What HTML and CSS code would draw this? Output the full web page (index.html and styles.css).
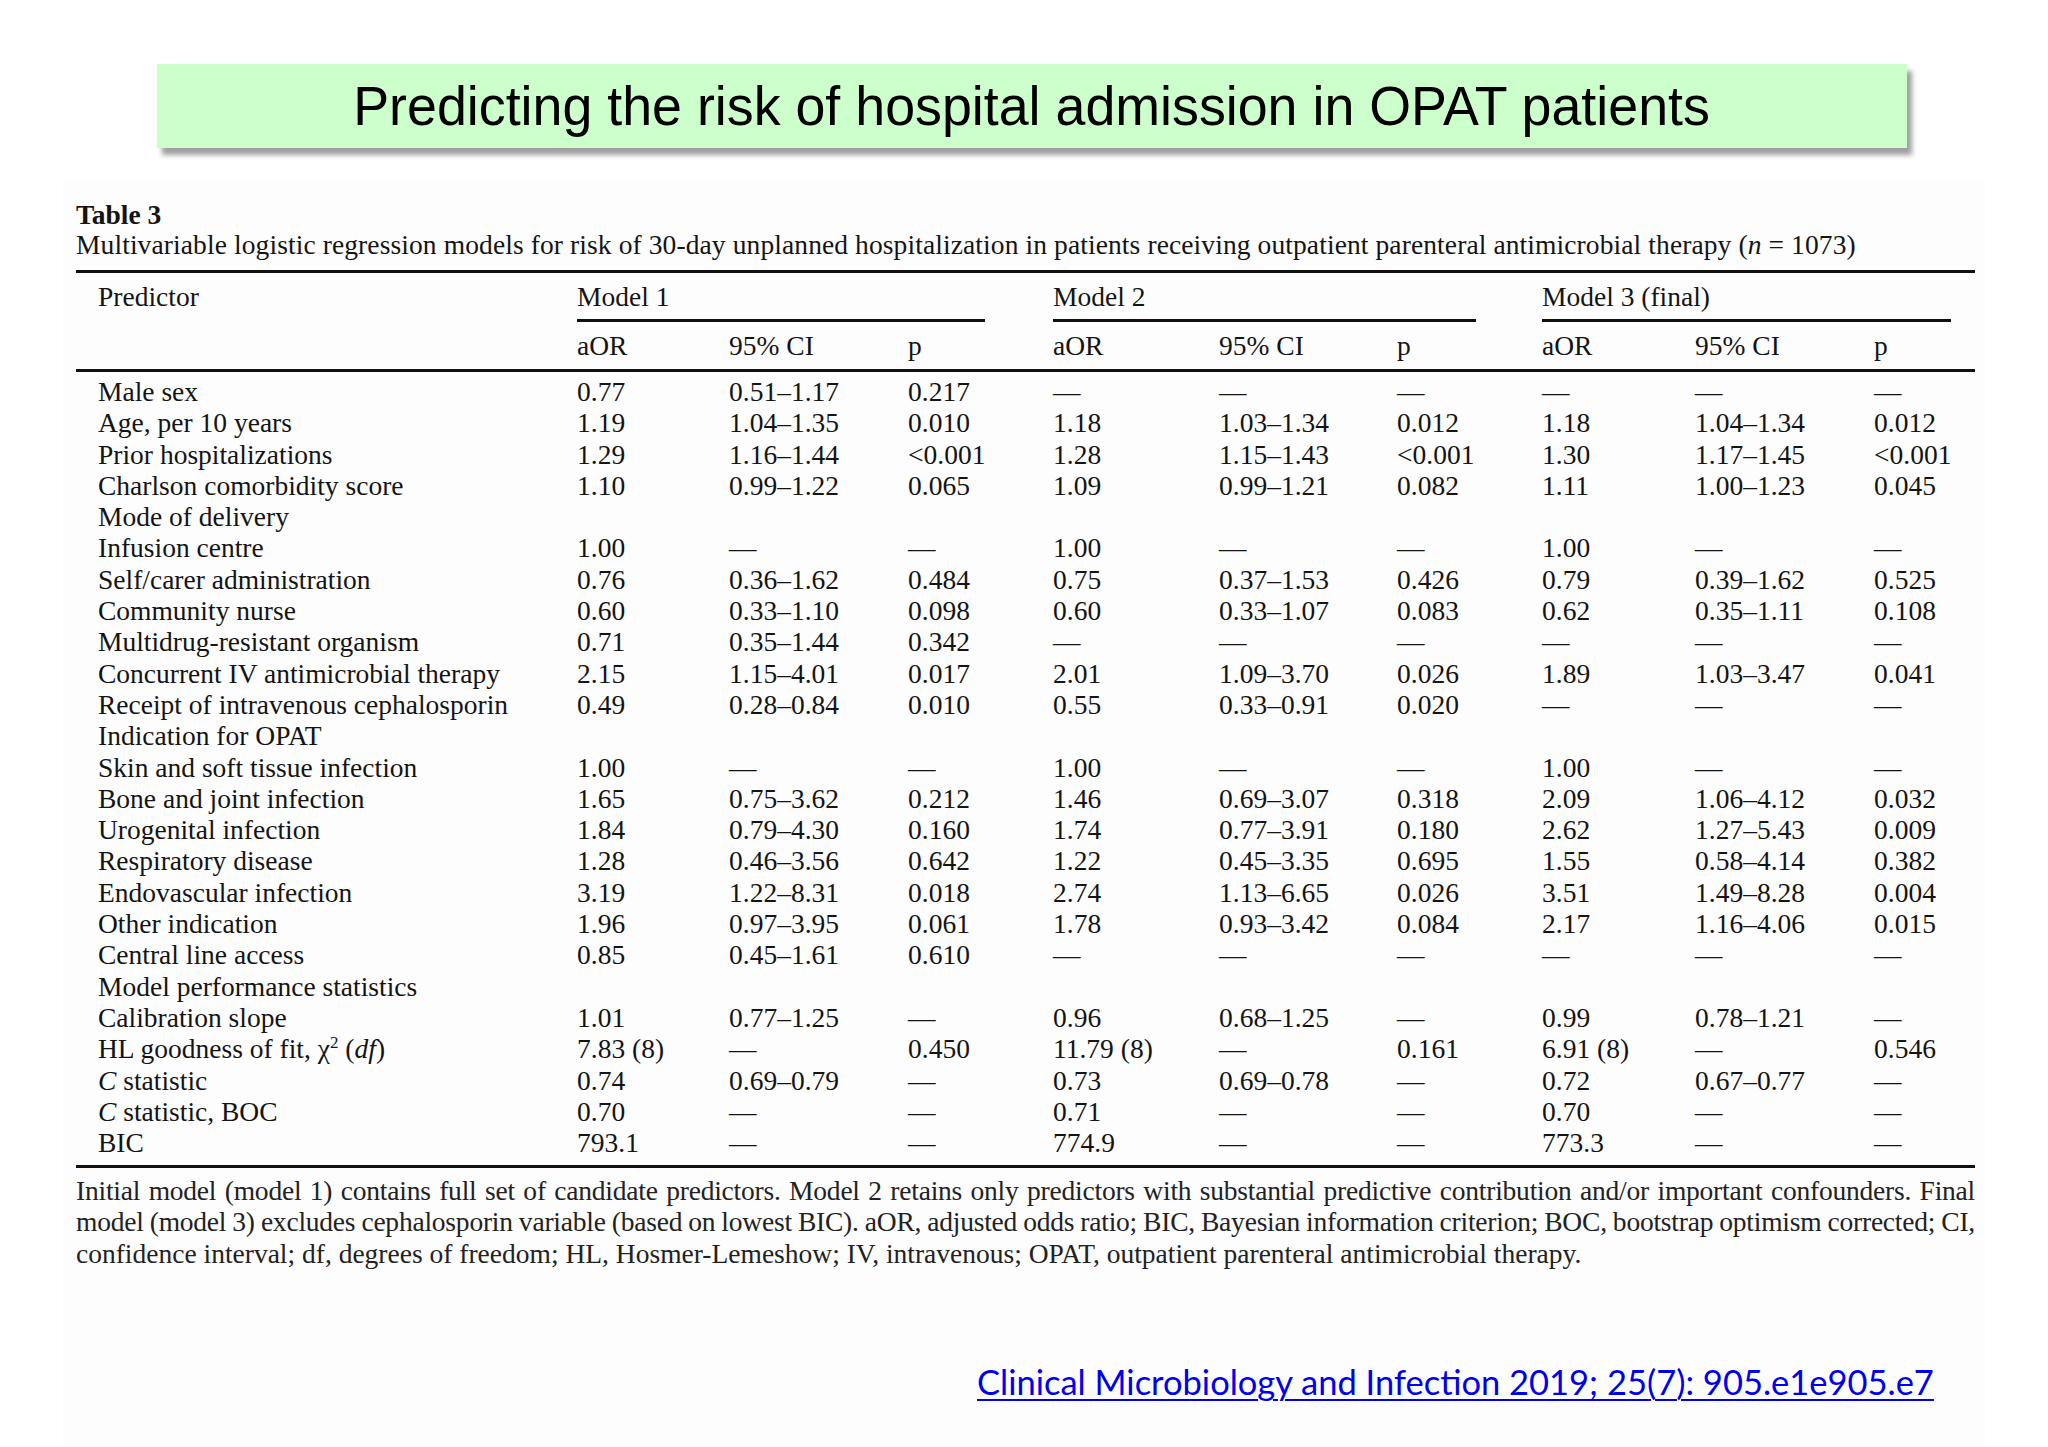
FILE: index.html
```html
<!DOCTYPE html>
<html lang="en">
<head>
<meta charset="utf-8">
<title>Predicting the risk of hospital admission in OPAT patients</title>
<link rel="stylesheet" href="styles.css">
</head>
<body>
<div class="slide">
  <div class="title-box"><span class="title-text">Predicting the risk of hospital admission in OPAT patients</span></div>
  <div class="paper">
    <div class="tbl-label">Table 3</div>
    <div class="tbl-caption">Multivariable logistic regression models for risk of 30-day unplanned hospitalization in patients receiving outpatient parenteral antimicrobial therapy (<i>n</i> = 1073)</div>
    <table class="data">
      <colgroup>
        <col class="c-pred"><col class="c-aor1"><col class="c-ci1"><col class="c-p1">
        <col class="c-aor2"><col class="c-ci2"><col class="c-p2">
        <col class="c-aor3"><col class="c-ci3"><col class="c-p3">
      </colgroup>
      <thead>
        <tr class="h1">
          <th class="pred">Predictor</th>
          <th colspan="3"><div class="mlabel">Model 1</div><div class="mrule r1"></div></th>
          <th colspan="3"><div class="mlabel">Model 2</div><div class="mrule r2"></div></th>
          <th colspan="3"><div class="mlabel">Model 3 (final)</div><div class="mrule r3"></div></th>
        </tr>
        <tr class="h2">
          <th class="pred"></th>
          <th>aOR</th><th>95% CI</th><th>p</th>
          <th>aOR</th><th>95% CI</th><th>p</th>
          <th>aOR</th><th>95% CI</th><th>p</th>
        </tr>
      </thead>
      <tbody>
        <tr class="first"><td class="pred">Male sex</td><td>0.77</td><td>0.51–1.17</td><td>0.217</td><td>—</td><td>—</td><td>—</td><td>—</td><td>—</td><td>—</td></tr>
        <tr><td class="pred">Age, per 10 years</td><td>1.19</td><td>1.04–1.35</td><td>0.010</td><td>1.18</td><td>1.03–1.34</td><td>0.012</td><td>1.18</td><td>1.04–1.34</td><td>0.012</td></tr>
        <tr><td class="pred">Prior hospitalizations</td><td>1.29</td><td>1.16–1.44</td><td>&lt;0.001</td><td>1.28</td><td>1.15–1.43</td><td>&lt;0.001</td><td>1.30</td><td>1.17–1.45</td><td>&lt;0.001</td></tr>
        <tr><td class="pred">Charlson comorbidity score</td><td>1.10</td><td>0.99–1.22</td><td>0.065</td><td>1.09</td><td>0.99–1.21</td><td>0.082</td><td>1.11</td><td>1.00–1.23</td><td>0.045</td></tr>
        <tr><td class="pred">Mode of delivery</td><td></td><td></td><td></td><td></td><td></td><td></td><td></td><td></td><td></td></tr>
        <tr><td class="pred">Infusion centre</td><td>1.00</td><td>—</td><td>—</td><td>1.00</td><td>—</td><td>—</td><td>1.00</td><td>—</td><td>—</td></tr>
        <tr><td class="pred">Self/carer administration</td><td>0.76</td><td>0.36–1.62</td><td>0.484</td><td>0.75</td><td>0.37–1.53</td><td>0.426</td><td>0.79</td><td>0.39–1.62</td><td>0.525</td></tr>
        <tr><td class="pred">Community nurse</td><td>0.60</td><td>0.33–1.10</td><td>0.098</td><td>0.60</td><td>0.33–1.07</td><td>0.083</td><td>0.62</td><td>0.35–1.11</td><td>0.108</td></tr>
        <tr><td class="pred">Multidrug-resistant organism</td><td>0.71</td><td>0.35–1.44</td><td>0.342</td><td>—</td><td>—</td><td>—</td><td>—</td><td>—</td><td>—</td></tr>
        <tr><td class="pred">Concurrent IV antimicrobial therapy</td><td>2.15</td><td>1.15–4.01</td><td>0.017</td><td>2.01</td><td>1.09–3.70</td><td>0.026</td><td>1.89</td><td>1.03–3.47</td><td>0.041</td></tr>
        <tr><td class="pred">Receipt of intravenous cephalosporin</td><td>0.49</td><td>0.28–0.84</td><td>0.010</td><td>0.55</td><td>0.33–0.91</td><td>0.020</td><td>—</td><td>—</td><td>—</td></tr>
        <tr><td class="pred">Indication for OPAT</td><td></td><td></td><td></td><td></td><td></td><td></td><td></td><td></td><td></td></tr>
        <tr><td class="pred">Skin and soft tissue infection</td><td>1.00</td><td>—</td><td>—</td><td>1.00</td><td>—</td><td>—</td><td>1.00</td><td>—</td><td>—</td></tr>
        <tr><td class="pred">Bone and joint infection</td><td>1.65</td><td>0.75–3.62</td><td>0.212</td><td>1.46</td><td>0.69–3.07</td><td>0.318</td><td>2.09</td><td>1.06–4.12</td><td>0.032</td></tr>
        <tr><td class="pred">Urogenital infection</td><td>1.84</td><td>0.79–4.30</td><td>0.160</td><td>1.74</td><td>0.77–3.91</td><td>0.180</td><td>2.62</td><td>1.27–5.43</td><td>0.009</td></tr>
        <tr><td class="pred">Respiratory disease</td><td>1.28</td><td>0.46–3.56</td><td>0.642</td><td>1.22</td><td>0.45–3.35</td><td>0.695</td><td>1.55</td><td>0.58–4.14</td><td>0.382</td></tr>
        <tr><td class="pred">Endovascular infection</td><td>3.19</td><td>1.22–8.31</td><td>0.018</td><td>2.74</td><td>1.13–6.65</td><td>0.026</td><td>3.51</td><td>1.49–8.28</td><td>0.004</td></tr>
        <tr><td class="pred">Other indication</td><td>1.96</td><td>0.97–3.95</td><td>0.061</td><td>1.78</td><td>0.93–3.42</td><td>0.084</td><td>2.17</td><td>1.16–4.06</td><td>0.015</td></tr>
        <tr><td class="pred">Central line access</td><td>0.85</td><td>0.45–1.61</td><td>0.610</td><td>—</td><td>—</td><td>—</td><td>—</td><td>—</td><td>—</td></tr>
        <tr><td class="pred">Model performance statistics</td><td></td><td></td><td></td><td></td><td></td><td></td><td></td><td></td><td></td></tr>
        <tr><td class="pred">Calibration slope</td><td>1.01</td><td>0.77–1.25</td><td>—</td><td>0.96</td><td>0.68–1.25</td><td>—</td><td>0.99</td><td>0.78–1.21</td><td>—</td></tr>
        <tr><td class="pred">HL goodness of fit, χ<sup>2</sup> (<i>df</i>)</td><td>7.83 (8)</td><td>—</td><td>0.450</td><td>11.79 (8)</td><td>—</td><td>0.161</td><td>6.91 (8)</td><td>—</td><td>0.546</td></tr>
        <tr><td class="pred"><i>C</i> statistic</td><td>0.74</td><td>0.69–0.79</td><td>—</td><td>0.73</td><td>0.69–0.78</td><td>—</td><td>0.72</td><td>0.67–0.77</td><td>—</td></tr>
        <tr><td class="pred"><i>C</i> statistic, BOC</td><td>0.70</td><td>—</td><td>—</td><td>0.71</td><td>—</td><td>—</td><td>0.70</td><td>—</td><td>—</td></tr>
        <tr class="last"><td class="pred">BIC</td><td>793.1</td><td>—</td><td>—</td><td>774.9</td><td>—</td><td>—</td><td>773.3</td><td>—</td><td>—</td></tr>
      </tbody>
    </table>
    <div class="footnote">
      <div class="fn-line fn-just">Initial model (model 1) contains full set of candidate predictors. Model 2 retains only predictors with substantial predictive contribution and/or important confounders. Final</div>
      <div class="fn-line fn-just">model (model 3) excludes cephalosporin variable (based on lowest BIC). aOR, adjusted odds ratio; BIC, Bayesian information criterion; BOC, bootstrap optimism corrected; CI,</div>
      <div class="fn-line">confidence interval; df, degrees of freedom; HL, Hosmer-Lemeshow; IV, intravenous; OPAT, outpatient parenteral antimicrobial therapy.</div>
    </div>
    <div class="ref-row"><a class="ref-link" href="#">Clinical Microbiology and Infection 2019; 25(7): 905.e1e905.e7</a></div>
  </div>
</div>
</body>
</html>
```

FILE: styles.css
```css
html, body {
  margin: 0;
  padding: 0;
  background: #ffffff;
}

.slide {
  width: 2048px;
  height: 1447px;
  overflow: hidden;
  padding-top: 64px;
  box-sizing: border-box;
  background: #ffffff;
}

.title-box {
  width: 1750px;
  height: 84px;
  margin-left: 157px;
  background: #ccffcc;
  box-shadow: 5px 7px 5px rgba(0, 0, 0, 0.38);
  display: flex;
  justify-content: center;
  align-items: center;
}

.title-text {
  display: inline-block;
  font-family: "Liberation Sans", Arial, sans-serif;
  font-size: 56px;
  line-height: 1;
  color: #000000;
  white-space: nowrap;
  transform: scaleX(0.96);
}

.paper {
  margin-top: 32px;
  margin-left: 63px;
  width: 1922px;
  height: 1267px;
  box-sizing: border-box;
  padding-top: 20px;
  padding-left: 13px;
  background: #fdfdfd;
  font-family: "Liberation Serif", "Times New Roman", serif;
  font-size: 27.5px;
  color: #141414;
}

.tbl-label {
  font-weight: bold;
  line-height: 30px;
  height: 30px;
}

.tbl-caption {
  line-height: 30px;
  height: 30px;
  white-space: nowrap;
  letter-spacing: 0.1px;
}

.data {
  margin-top: 10px;
  width: 1899px;
  table-layout: fixed;
  border-collapse: separate;
  border-spacing: 0;
  border-top: 3px solid #111111;
  border-bottom: 3px solid #111111;
}

.c-pred { width: 501px; }
.c-aor1 { width: 152px; }
.c-ci1 { width: 179px; }
.c-p1 { width: 145px; }
.c-aor2 { width: 166px; }
.c-ci2 { width: 178px; }
.c-p2 { width: 145px; }
.c-aor3 { width: 153px; }
.c-ci3 { width: 179px; }
.c-p3 { width: 101px; }

.data th {
  font-weight: normal;
  text-align: left;
  vertical-align: top;
  padding: 0;
  line-height: 30px;
  white-space: nowrap;
}

.data .pred {
  padding-left: 22px;
}

.h1 th {
  padding-top: 9px;
}

.mlabel {
  height: 30px;
}

.mrule {
  height: 3px;
  margin-top: 7px;
  background: #111111;
}

.r1 { width: 408px; }
.r2 { width: 423px; }
.r3 { width: 409px; }

.h2 th {
  padding-top: 9px;
  padding-bottom: 8px;
  border-bottom: 3px solid #111111;
}

.data td {
  padding: 0;
  line-height: 31.3px;
  height: 31.3px;
  white-space: nowrap;
  vertical-align: top;
}

.data tr.first td {
  padding-top: 4px;
}

.data tr.last td {
  padding-bottom: 6.5px;
}

.data sup {
  font-size: 17px;
  line-height: 0;
  vertical-align: 10px;
}

.footnote {
  margin-top: 7px;
  width: 1899px;
  color: #222222;
}

.fn-line {
  line-height: 31.5px;
  height: 31.5px;
  white-space: nowrap;
}

.fn-just {
  word-spacing: -1.5px;
  letter-spacing: -0.22px;
  text-align: justify;
  text-align-last: justify;
}

.ref-row {
  margin-top: 93px;
  padding-left: 901px;
  line-height: 40px;
}

.ref-link {
  font-family: Lato, "Open Sans", sans-serif;
  font-size: 34.5px;
  color: #0000ee;
  text-decoration: underline;
  text-decoration-thickness: 2px;
  text-underline-offset: 4px;
}
```
